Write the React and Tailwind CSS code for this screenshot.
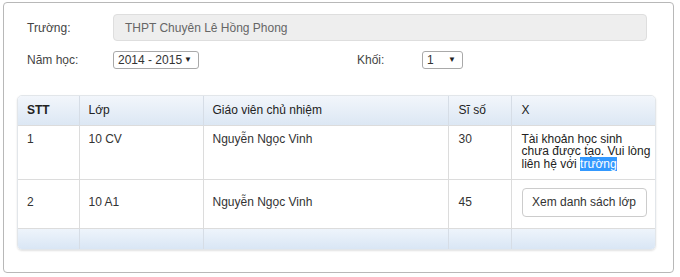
const rows = [
    { stt: 1, lop: "10 CV", gv: "Nguyễn Ngọc Vinh", siSo: 30, created: false },
    { stt: 2, lop: "10 A1", gv: "Nguyễn Ngọc Vinh", siSo: 45, created: true },
];

const Select = ({ value, width }) => (
    <div className={`${width} h-[18px] flex items-center justify-between pl-[4px] pr-[6px] border border-[#a9a9a9] rounded-[3px] bg-white text-[12px] text-[#333]`}>
        <span>{value}</span>
        <span className="text-[8px] leading-none text-[#222]">▼</span>
    </div>
);

const App = () => {
    return (
        <div className="w-[680px] h-[277px] bg-white pt-[2px] pl-[3px] font-['Liberation_Sans',Arial,sans-serif] text-[12px] text-[#333]">
            <div className="w-[671px] h-[271px] border border-[#b8b8b8] rounded-[4px] pt-[11px]">
                <div className="flex items-center h-[27px] pl-[23px]">
                    <label className="w-[86px] text-[#444]">Trường:</label>
                    <div className="w-[534px] h-[27px] flex items-center pl-[11px] bg-[#eeeeee] border border-[#dedede] rounded-[4px] text-[#666]">
                        THPT Chuyên Lê Hồng Phong
                    </div>
                </div>
                <div className="flex items-center h-[18px] mt-[10px] pl-[23px]">
                    <label className="w-[86px] text-[#444]">Năm học:</label>
                    <Select value="2014 - 2015" width="w-[86px]" />
                    <label className="ml-[158px] w-[65px] text-[#444]">Khối:</label>
                    <Select value="1" width="w-[41px]" />
                </div>
                <div className="ml-[13px] mt-[26px] w-[639px] rounded-[5px] overflow-hidden border border-[#e2e6ea] shadow-[0_1px_2px_rgba(0,0,0,0.12)]">
                    <table className="w-full table-fixed border-collapse text-left">
                        <colgroup>
                            <col className="w-[61px]" />
                            <col className="w-[124px]" />
                            <col className="w-[245px]" />
                            <col className="w-[63px]" />
                            <col />
                        </colgroup>
                        <thead>
                            <tr className="h-[29px] bg-gradient-to-b from-[#f2f6fb] to-[#dce7f4] text-[#222]">
                                <th className="px-[9px] font-bold">STT</th>
                                <th className="px-[9px] font-normal border-l border-[#d6dde6]">Lớp</th>
                                <th className="px-[9px] font-normal border-l border-[#d6dde6]">Giáo viên chủ nhiệm</th>
                                <th className="px-[10px] font-normal border-l border-[#d6dde6]">Sĩ số</th>
                                <th className="px-[10px] font-normal border-l border-[#d6dde6]">X</th>
                            </tr>
                        </thead>
                        <tbody className="leading-[12.5px]">
                            {rows.map(r => (
                                <tr key={r.stt} className={`${r.created ? 'h-[49px]' : 'h-[54px]'} border-t border-[#dcdcdc] bg-white`}>
                                    <td className="px-[9px] py-[7px] align-baseline">{r.stt}</td>
                                    <td className="px-[9px] py-[7px] align-baseline border-l border-[#dcdcdc]">{r.lop}</td>
                                    <td className="px-[9px] py-[7px] align-baseline border-l border-[#dcdcdc]">{r.gv}</td>
                                    <td className="px-[10px] py-[7px] align-baseline border-l border-[#dcdcdc]">{r.siSo}</td>
                                    <td className="px-[10px] py-[7px] align-baseline border-l border-[#dcdcdc]">
                                        {r.created ? (
                                            <button className="mt-[1px] h-[29px] w-[125px] border border-[#cccccc] rounded-[4px] bg-white text-[#333] text-[12px]">
                                                Xem danh sách lớp
                                            </button>
                                        ) : (
                                            <div className="text-[#222] whitespace-nowrap">
                                                Tài khoản học sinh<br />
                                                chưa được tạo. Vui lòng<br />
                                                liên hệ với <span className="bg-[#3399ff] text-white">trường</span>
                                            </div>
                                        )}
                                    </td>
                                </tr>
                            ))}
                            <tr className="h-[21px] border-t border-[#dcdcdc] bg-gradient-to-b from-[#eef4fb] to-[#d9e6f5]">
                                <td></td>
                                <td className="border-l border-[#d6dde6]"></td>
                                <td className="border-l border-[#d6dde6]"></td>
                                <td className="border-l border-[#d6dde6]"></td>
                                <td className="border-l border-[#d6dde6]"></td>
                            </tr>
                        </tbody>
                    </table>
                </div>
            </div>
        </div>
    );
};

export default App;
